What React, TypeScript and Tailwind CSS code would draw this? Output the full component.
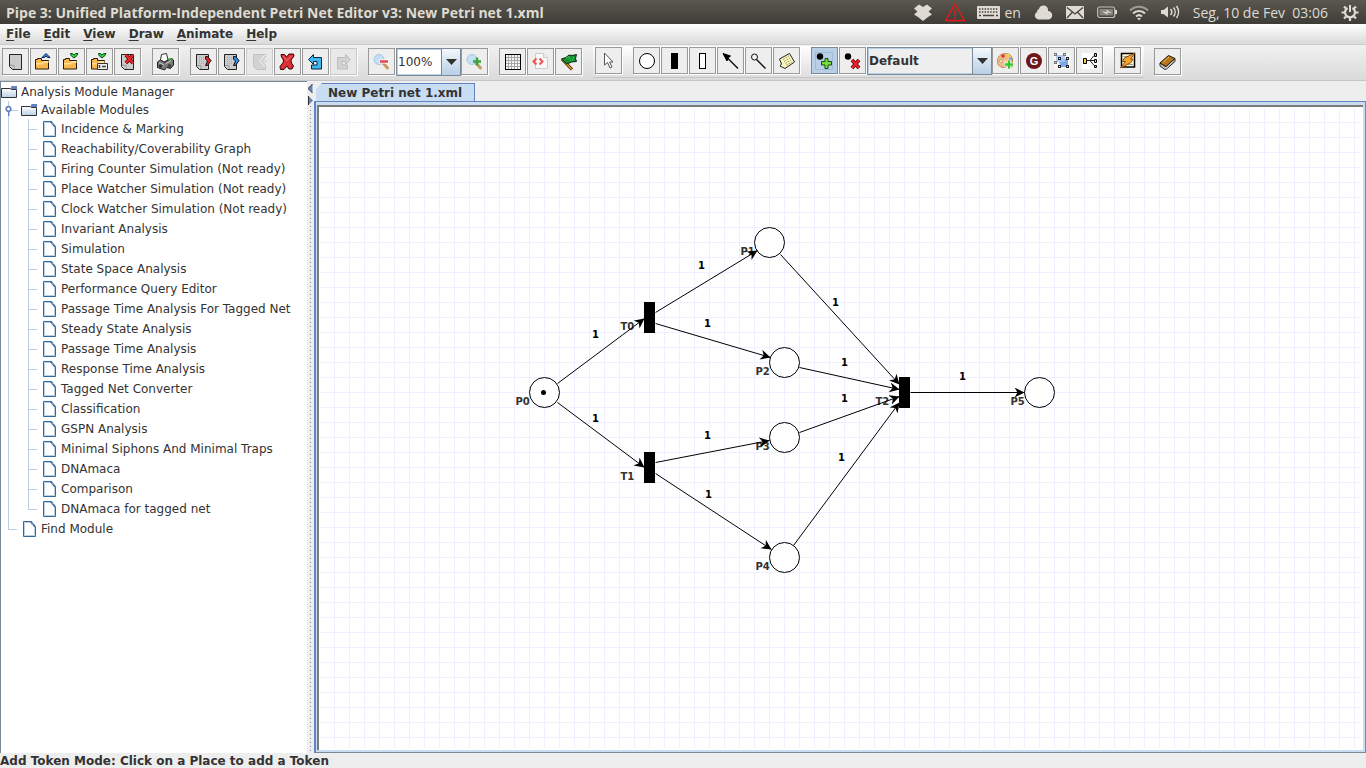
import React from "react";

const UI = "font-['DejaVu_Sans',Verdana,sans-serif]";

/* ---------- toolbar icons ---------- */

function Icon({ children, crisp = true }: { children: React.ReactNode; crisp?: boolean }) {
  return (
    <svg width="19" height="19" viewBox="0 0 19 19" aria-hidden="true" shapeRendering={crisp ? "crispEdges" : "auto"}>
      {children}
    </svg>
  );
}

function Page({ faded = false }: { faded?: boolean }) {
  return (
    <g>
      <path
        d="M3.5 2.5h12v15h-9l-3-3z"
        fill={faded ? "#d3d3d3" : "#cbcbcb"}
        stroke={faded ? "#c2c2c2" : "#222"}
      />
      {!faded && <path d="M4 13l4 .5v3.500" fill="none" stroke="#9a9a9a" />}
    </g>
  );
}

function Folder() {
  return (
    <g>
      <path d="M1.500 7.500h2v-1h4v2h7v8.500h-13z" fill="#f9b84c" stroke="#2a1a05" />
      <path d="M2 11h6l1.500-2h5v2h-5l-1 1.500h-6.500z" fill="#ffdf9a" />
    </g>
  );
}

function Cross({ x = 0, y = 0 }: { x?: number; y?: number }) {
  return (
    <g transform={`translate(${x} ${y})`}>
      <path d="M1 1l7 8M8 1l-7 8" stroke="#5a0000" strokeWidth="3.600" />
      <path d="M1 1l7 8M8 1l-7 8" stroke="#f0242c" strokeWidth="2" />
    </g>
  );
}

function Chevron({ color }: { color: string }) {
  return (
    <g>
      <path d="M11.500 4.500h2l3.500 4-3.500 5h-2l2-4.500-2-2z" fill={color} stroke="#111" />
    </g>
  );
}

function Clipboard({ color }: { color: string }) {
  return (
    <Icon crisp={false}>
      <path d="M2.500 2.500h12v15h-9l-3-3z" fill="#cbcbcb" stroke="#222" />
      <path d="M5 5.500h5M5 7.500h6M5 9.500h5M5 11.500h5" stroke="#aaa" strokeDasharray="1 1" />
      <path d="M3 13.500h4v3.500" fill="none" stroke="#999" />
      <Chevron color={color} />
    </Icon>
  );
}

function SaveMark() {
  return <path d="M8.500 1.500h2l1.500 1.500 1.500-1.500h2.500l-1 2-3 2.500-3-2.500z" fill="#35d04a" stroke="#0b4a12" />;
}

function PlusSign({ x, y }: { x: number; y: number }) {
  return (
    <g transform={`translate(${x} ${y})`}>
      <path d="M3 0h3v3h3v3h-3v3h-3v-3h-3v-3h3z" fill="#39c532" stroke="#fff" strokeWidth=".6" />
    </g>
  );
}

const icons = {
  new: <Icon crisp={false}><Page /></Icon>,
  open: <Icon crisp={false}><Folder /><path d="M8 5.500l4-4 4 4h-2.500l-1.500-1.500-1.500 1.500z" fill="#2a8cf0" stroke="#0b1f45" /></Icon>,
  save: <Icon crisp={false}><Folder /><SaveMark /></Icon>,
  saveAs: (
    <Icon crisp={false}>
      <Folder />
      <SaveMark />
      <path d="M7.500 11.500h10v6h-10z" fill="#eee" stroke="#333" /><path d="M9.500 13v3M12 14.500h4" stroke="#444" strokeWidth="1.500" />
    </Icon>
  ),
  close: <Icon crisp={false}><Page /><Cross x={7} y={2} /></Icon>,
  print: (
    <Icon crisp={false}>
      <path d="M4.500 8l1-5.500 5-1 1.500 6.500-4 2z" fill="#fff" stroke="#333" />
      <path d="M1.500 10l3-2 4 2.500 4-2.500 3-1.500 2 1.500v5l-3 3.500-4-1-2 2.500-7-2.500z" fill="#7c7c7c" stroke="#1d1d1d" />
      <path d="M3 10.500l5 2.500M10 11.500l5-3" stroke="#c8c8c8" fill="none" /><circle cx="4.500" cy="14" r="1.800" fill="#333" /><circle cx="13.500" cy="14" r="2" fill="#444" />
      <path d="M12 7h3" stroke="#35c435" strokeWidth="1.500" />
    </Icon>
  ),
  cut: <Clipboard color="#e8242c" />,
  copy: <Clipboard color="#2d8ff0" />,
  paste: <Icon crisp={false}><Page faded /><path d="M16 4l-4 5 4 5" fill="none" stroke="#efefef" strokeWidth="4" /><path d="M16 4l-4 5 4 5" fill="none" stroke="#cfcfcf" strokeWidth="2" /></Icon>,
  delete: (
    <Icon crisp={false}>
      <path d="M3 2.500h3.500l2 2.500 2.500-3h4.500l.5 2-3 4 .5 3 2 3-1.500 3h-3l-2-3-3 3.500h-3.500l-.5-3 3.500-4.500-.5-3-1.500-2z" fill="#dc2f36" stroke="#3d0508" />
      <path d="M5 4l4 4.500 4.500-4.500" fill="none" stroke="#f0777b" />
    </Icon>
  ),
  undo: <Icon crisp={false}><path d="M2.500 7.500l5-5v3h8v11.500h-10v-4h5.500v-3.500h-3.500v3z" fill="#3fb7ef" stroke="#08263f" /></Icon>,
  redo: <Icon crisp={false}><path d="M16.500 7.500l-5-5v3h-8v11.500h10v-4h-5.500v-3.500h3.500v3z" fill="#d2d2d2" stroke="#bdbdbd" /></Icon>,
  zoomOut: (
    <Icon crisp={false}>
      <path d="M11 11l4.500 5" stroke="#c79a62" strokeWidth="3" strokeLinecap="round" />
      <circle cx="7" cy="7.500" r="5" fill="#c4e0f7" stroke="#a9c3dd" /><path d="M7.500 9.500h9" stroke="#fff" strokeWidth="4" /><path d="M8 9.500h8" stroke="#e4434b" strokeWidth="2.500" />
    </Icon>
  ),
  zoomIn: (
    <Icon crisp={false}>
      <path d="M11 11l4.500 5" stroke="#c79a62" strokeWidth="3" strokeLinecap="round" />
      <circle cx="7" cy="7.500" r="5" fill="#c4e0f7" stroke="#a9c3dd" /><path d="M8 9.500h8M12 5.500v8" stroke="#38a53a" strokeWidth="2.500" />
    </Icon>
  ),
  grid: (
    <Icon>
      <path d="M2.500 2.500h15v15h-15z" fill="#f4f4f4" />
      <path d="M5.500 3v14M8.500 3v14M11.500 3v14M14.500 3v14M3 5.500h14M3 8.500h14M3 11.500h14M3 14.500h14" stroke="#a6a6a6" />
      <path d="M2.500 2.500h15v15h-15z" fill="none" stroke="#000" />
    </Icon>
  ),
  xml: (
    <Icon crisp={false}>
      <path d="M4.500 1.500h8l4 4v11h-12z" fill="#f8f8f8" stroke="#ccc" /><path d="M12.500 1.500v4h4" fill="#eee" stroke="#ccc" />
      <path d="M5.500 6.500L2.500 9.500l3 3M8.500 6.500l3 3-3 3" fill="none" stroke="#ef5350" strokeWidth="2" />
    </Icon>
  ),
  flag: (
    <Icon crisp={false}>
      <path d="M3 7l10 10.500" stroke="#3a2203" strokeWidth="3" /><path d="M3 7l10 10.500" stroke="#e69a24" strokeWidth="1.500" />
      <path d="M2.500 7l4.500-1.500 3-2.500 3 .5 4.500-1-1 4 1 3-5 .5-4.500 2z" fill="#148f32" stroke="#062c10" /><path d="M7 6.500l3-2 1.500 4M14.500 4.500l-1 4" fill="none" stroke="#3fc457" />
    </Icon>
  ),
  select: <Icon crisp={false}><path d="M5.500 2v12l3-2.500 2.500 5.500 2-1-2.500-5h3.500z" fill="#fff" stroke="#555" /></Icon>,
  place: <Icon crisp={false}><circle cx="10" cy="10" r="7.500" fill="#fff" stroke="#000" /></Icon>,
  immediate: <Icon><path d="M6 2h7v16h-7z" /></Icon>,
  timed: <Icon><path d="M6.500 2.500h6v15h-6z" fill="#fff" stroke="#000" /></Icon>,
  arc: <Icon crisp={false}><path d="M5 5.500l12 12" stroke="#000" strokeWidth="1.300" /><path d="M2 2.500l7.500 2.500-2.500 2-1 3z" stroke="#000" /></Icon>,
  inhibitor: <Icon crisp={false}><circle cx="5.500" cy="6" r="3" fill="#f2f2f2" stroke="#111" /><path d="M7.500 8.500l9 9" stroke="#111" strokeWidth="1.400" /></Icon>,
  note: (
    <Icon crisp={false}>
      <path d="M2.500 8l10-5.500 5 8.500-9.500 6.500-5-2.500 1.500-2z" fill="#faf6c0" stroke="#222" /><path d="M6 8.500l6-3.500M7 10.500l6-3.500M8 12.500l6-3.500M9 14.500l6-3.500" stroke="#a8a36c" strokeDasharray="2 1" />
    </Icon>
  ),
  addToken: (
    <Icon crisp={false}>
      <path d="M.5 1.500h17v17h-17z" fill="none" stroke="#a3bbd8" />
      <circle cx="5" cy="5.500" r="3.200" /><path d="M10 7.500h3v3h3.500v3.500h-3.500v3.500h-3v-3.500h-3.500v-3.500h3.500z" fill="#7bdc3e" stroke="#174d09" />
    </Icon>
  ),
  removeToken: <Icon crisp={false}><circle cx="5" cy="5.500" r="3.200" /><Cross x={8} y={8} /></Icon>,
  palette: (
    <Icon crisp={false}>
      <path d="M1.500 10c0-4 3-7.500 8-7.500 4.500 0 7 3 7 6.500v7c-2 0-3-2-5-1.500-1 1-2.500 2-4.500 2-2 0-2.500-1.500-4-2s-1.500-2.500-1.500-4.500z" fill="#edbd88" stroke="#c08b58" />
      <circle cx="7" cy="5" r="1.800" fill="#d93431" /><circle cx="12" cy="4.500" r="1.600" fill="#f3d846" /><circle cx="14.500" cy="8" r="1.600" fill="#5d9fe3" />
      <circle cx="5" cy="10" r="1.500" fill="#fff2df" stroke="#b57b46" strokeWidth=".6" /><circle cx="9" cy="10.500" r="1" fill="#fff2df" /><PlusSign x={8.5} y={9} />
    </Icon>
  ),
  group: (
    <Icon crisp={false}>
      <rect x="2" y="2" width="16" height="16" fill="#f5eeee" /><circle cx="10" cy="10" r="8" fill="#6d1719" />
      <text x="10" y="14" textAnchor="middle" fontSize="11" fontWeight="bold" fill="#fff" fontFamily="Liberation Sans, sans-serif">G</text>
    </Icon>
  ),
  unfold: (
    <Icon crisp={false}>
      <rect x="2" y="2" width="16" height="16" fill="#f8f8f8" /><path d="M7 8h9v8h-8z" fill="#7ea6e4" /><path d="M4 4h9v7h-9z" fill="#a5c3f0" opacity=".85" />
      {[[3, 3], [12, 3], [3, 11], [7, 7], [15, 7], [7, 15], [15, 15]].map(([x, y]) => (
        <rect key={`${x}-${y}`} x={x - 0.5} y={y - 0.5} width="2" height="2" fill="#ddd" stroke={x > 6 && y > 6 ? "#222" : "#777"} />
      ))}
    </Icon>
  ),
  tree: (
    <Icon crisp={false}>
      <rect x="2" y="2" width="16" height="16" fill="#fff" />
      <path d="M6 9.500h8M10 9.500l4-5M10 9.500l4 5" fill="none" stroke="#222" />
      <path d="M3.500 7.500h3v5h-3z" fill="#f5c93f" stroke="#000" />
      <path d="M14.500 2.500h2v3h-2zM14.500 8.500h2v3h-2zM14.500 14.500h2v2h-2z" fill="#f5c93f" stroke="#000" />
    </Icon>
  ),
  animate: (
    <Icon crisp={false}>
      <path d="M3.500 2.500h13v13.500h-13z" fill="#fffbd0" stroke="#000" strokeWidth="1.500" /><path d="M5.500 5.500h6M5.500 8h3M10 13.500h5" stroke="#999" />
      <path d="M17 2l-10.500 5-2 3.500h3l-5 6.500 10.500-5.500 2-3.500h-2.500z" fill="#f6a531" stroke="#8a4b07" />
    </Icon>
  ),
  help: (
    <Icon crisp={false}>
      <path d="M2 11v3l5 3.500 1.500-.5 8.500-7.500v-3l-9.500 8z" fill="#e4e4e4" stroke="#222" />
      <path d="M2 11l8.500-7.500 6.500 3-9 8z" fill="#b5771c" stroke="#221402" /><path d="M4.500 11l6.500-6" stroke="#e5b15b" /><path d="M3 13l5 3.500 8-7.500" fill="none" stroke="#aaa" />
    </Icon>
  ),
};

type IconName = keyof typeof icons;

function ToolButton({ icon, label, disabled, active }: { icon: IconName; label: string; disabled?: boolean; active?: boolean }) {
  return (
    <button
      type="button"
      aria-label={label}
      title={label}
      disabled={disabled}
      className={`flex size-[27px] shrink-0 items-center justify-center border shadow-[1px_1px_0_#fff] ${
        active ? "border-[#7a8a99] bg-[#b8cfe5]" : disabled ? "border-[#c8c8c8] bg-[#e8e8e8]" : "border-[#999] bg-[#eee]"
      }`}
    >
      {icons[icon]}
    </button>
  );
}

function Group({ items }: { items: [IconName, string, ("disabled" | "active")?][] }) {
  return (
    <div className="flex gap-px">
      {items.map(([icon, label, state]) => (
        <ToolButton key={icon} icon={icon} label={label} disabled={state === "disabled"} active={state === "active"} />
      ))}
    </div>
  );
}

function Combo({ label, value, className, tone }: { label: string; value: string; className: string; tone: string }) {
  return (
    <div className={`relative h-7 shrink-0 border border-[#7a8a99] ${className}`}>
      <select
        aria-label={label}
        defaultValue={value}
        className={`h-full w-full appearance-none rounded-none border border-[#b8cfe5] text-[12px] text-[#333] outline-none ${tone}`}
      >
        <option>{value}</option>
      </select>
      <span className="pointer-events-none absolute inset-y-0 right-0 flex w-[19px] items-center justify-center border-l border-[#7a8a99] bg-linear-to-b from-[#f4f8fc] to-[#b8cfe5]">
        <svg width="11" height="6" viewBox="0 0 11 6"><path d="M0 0h11L5.500 6z" fill="#333" /></svg>
      </span>
    </div>
  );
}

function ToolBar() {
  return (
    <div className="flex h-9 items-start gap-[11px] border-b border-[#c6c6c6] bg-linear-to-b from-[#f1f1f1] to-[#dadada] pt-[3px] pl-0.5">
      <Group items={[["new", "New"], ["open", "Open"], ["save", "Save"], ["saveAs", "Save as"], ["close", "Close"]]} />
      <Group items={[["print", "Print"]]} />
      <Group items={[["cut", "Cut"], ["copy", "Copy"], ["paste", "Paste", "disabled"], ["delete", "Delete"], ["undo", "Undo"], ["redo", "Redo", "disabled"]]} />
      <div className="flex">
        <ToolButton icon="zoomOut" label="Zoom out" />
        <Combo label="Zoom" value="100%" className="ml-px w-[65px]" tone="bg-white font-normal" />
        <ToolButton icon="zoomIn" label="Zoom in" />
      </div>
      <Group items={[["grid", "Cycle grid"], ["xml", "XML"], ["flag", "Animation mode"]]} />
      <div className="-mt-px flex items-start gap-[10px]">
        <div className="-mt-px flex gap-[11px] border-b border-[#c6c6c6] bg-linear-to-b from-[#fff] to-[#dedede] pt-px pr-[3px] pb-0.5 pl-0.5">
          <Group items={[["select", "Select"]]} />
          <Group items={[["place", "Place"], ["immediate", "Immediate transition"], ["timed", "Timed transition"], ["arc", "Arc"], ["inhibitor", "Inhibitor arc"], ["note", "Annotation"]]} />
          <div className="flex">
            <Group items={[["addToken", "Add token", "active"], ["removeToken", "Remove token"]]} />
            <Combo label="Token class" value="Default" className="ml-px w-[125px]" tone="bg-[#eee] font-bold" />
            <Group items={[["palette", "Specify token classes"], ["group", "Group"], ["unfold", "Unfold"], ["tree", "Hierarchy"]]} />
          </div>
          <Group items={[["animate", "Toggle drag mode"]]} />
        </div>
        <div className="pt-px">
          <ToolButton icon="help" label="Help" />
        </div>
      </div>
    </div>
  );
}

/* ---------- desktop panel ---------- */

function TrayIcon({ children, w = 20 }: { children: React.ReactNode; w?: number }) {
  return (
    <svg width={w} height="20" viewBox={`0 0 ${w} 20`} fill="#dfdbd2" aria-hidden="true">
      {children}
    </svg>
  );
}

function TopPanel() {
  return (
    <header className="flex h-6 items-center bg-linear-to-b from-[#5b584f] to-[#3d3c37] px-1.5 font-['Open_Sans','Noto_Sans',sans-serif] text-[14px] whitespace-nowrap text-[#dfdbd2]">
      <h1 className="flex-1 font-bold">Pipe 3: Unified Platform-Independent Petri Net Editor v3: New Petri net 1.xml</h1>
      <div className="flex items-center gap-3">
        <div className="flex items-center gap-2">
          <TrayIcon><path d="M6 2.500l4 2.500 4-2.500 5 4-3.500 3 3.500 3-4 2.500-5 4-5-4-4-2.500 3.500-3-3.500-3z" /></TrayIcon>
          <div className="pl-1">
            <TrayIcon><path d="M10 2l9.500 16.500h-19zM10 7.500v6M10 15v2" fill="none" stroke="#f01616" strokeWidth="1.300" /></TrayIcon>
          </div>
        </div>
        <div className="flex items-center gap-1">
          <TrayIcon w={23}>
            <rect x="0" y="4" width="23" height="13" rx="1" />
            <path d="M2 7h19M2 10h19" stroke="#47453e" strokeWidth="1.500" strokeDasharray="1.500 1.300" /><path d="M2 13.500h2M6 13.500h11M19 13.500h2" stroke="#47453e" strokeWidth="1.500" />
          </TrayIcon>
          <span>en</span>
        </div>
        <TrayIcon><path d="M5 17.500a4 4 0 0 1-1-7.500 3 3 0 0 1 2-3 4.500 4.500 0 0 1 9 2 4 4 0 0 1 0 8.500z" /></TrayIcon>
        <TrayIcon>
          <rect x="1" y="4" width="18" height="13" rx="1" /><path d="M2 5.500l8 6.500 8-6.500M2 16l5.500-6M18 16l-5.500-6" fill="none" stroke="#47453e" strokeWidth="1.300" />
        </TrayIcon>
        <TrayIcon>
          <rect x=".7" y="5" width="17" height="10.500" rx="2" fill="none" stroke="#c4c0b6" strokeWidth="1.200" /><rect x="2.500" y="7" width="13.500" height="6.500" fill="#87847b" />
          <path d="M18 8h2v4h-2z" /><path d="M5 9.500l5 .5-1-2.500 6 3.500-5-.5 1 2.500z" />
        </TrayIcon>
        <TrayIcon>
          <g fill="none" stroke="#dfdbd2" strokeWidth="2"><path d="M1 8.500a12.500 12.500 0 0 1 18 0" opacity=".55" /><path d="M4 11.500a8.500 8.500 0 0 1 12 0" /><path d="M7 14.500a4.500 4.500 0 0 1 6 0" /></g><path d="M8 16h4l-2 2.500z" />
        </TrayIcon>
        <TrayIcon>
          <path d="M0 8h2.500L7 4.500v11L2.500 12H0z" /><g fill="none" stroke="#dfdbd2" strokeWidth="1.500"><path d="M9.500 7a4.500 4.500 0 0 1 0 6M12.500 5.500a7 7 0 0 1 0 9M15.500 4a10 10 0 0 1 0 12" /></g>
        </TrayIcon>
        <time className="whitespace-pre">Seg, 10 de Fev  03:06</time>
        <TrayIcon>
          <g fill="none" stroke="#dfdbd2"><path d="M7.500 6a5 5 0 1 0 5 0" strokeWidth="2.200" /><path d="M10 3v7" strokeWidth="2" /><path d="M1.500 10.500h3M15.500 10.500h3M4 4.500l2 2M16 4.500l-2 2M4 16.500l2-2M16 16.500l-2-2M10 16v3" strokeWidth="2.200" /></g>
        </TrayIcon>
      </div>
    </header>
  );
}

/* ---------- menu ---------- */

function MenuBar() {
  return (
    <nav className="flex h-[21px] items-center gap-[13px] border-b border-[#ccc] bg-linear-to-b from-white to-[#dadada] pb-px pl-1.5 text-[12px] font-bold">
      {["File", "Edit", "View", "Draw", "Animate", "Help"].map((m) => (
        <button key={m} type="button"><u className="underline-offset-2">{m[0]}</u>{m.slice(1)}</button>
      ))}
    </nav>
  );
}

/* ---------- module tree ---------- */

const modules = [
  "Incidence & Marking", "Reachability/Coverability Graph", "Firing Counter Simulation (Not ready)",
  "Place Watcher Simulation (Not ready)", "Clock Watcher Simulation (Not ready)", "Invariant Analysis", "Simulation",
  "State Space Analysis", "Performance Query Editor", "Passage Time Analysis For Tagged Net", "Steady State Analysis",
  "Passage Time Analysis", "Response Time Analysis", "Tagged Net Converter", "Classification", "GSPN Analysis",
  "Minimal Siphons And Minimal Traps", "DNAmaca", "Comparison", "DNAmaca for tagged net",
];

function FolderIcon() {
  return (
    <svg width="16" height="14" viewBox="0 0 16 14" className="shrink-0" aria-hidden="true">
      <defs><linearGradient id="folder" x2="0" y2="1"><stop stopColor="#fff" /><stop offset="1" stopColor="#b8cfe5" /></linearGradient></defs>
      <path d="M.5 3.500h8.500l1.500 1h5v8h-15z" fill="url(#folder)" stroke="#333" />
      <path d="M10.500 1h5.500v3h-6.500z" fill="#6382bf" />
    </svg>
  );
}

function FileIcon() {
  return (
    <svg width="13" height="16" viewBox="0 0 13 16" className="shrink-0" aria-hidden="true">
      <path d="M.5.5h8l4 5v10h-12z" fill="#fff" stroke="#35679d" />
      <path d="M1.500 14.500v-13h6M11.500 7v7.500h-10" fill="none" stroke="#b8cfe5" />
      <path d="M7 1l5 6v-2l-3.500-4.500z" fill="#35679d" /><path d="M8 3.500l2.500-1" stroke="#b8cfe5" />
    </svg>
  );
}

const branch = "before:w-[9px] before:shrink-0 before:border-t before:border-[#b8cfe5] before:content-['']";

function ModuleTree() {
  return (
    <aside className="w-[307px] shrink-0 overflow-hidden border-t border-l border-[#7a8a99] bg-white text-[12px] whitespace-nowrap">
      <div className="flex h-[19px] items-center gap-1"><FolderIcon />Analysis Module Manager</div>
      <ul className="pl-[7px]">
        <li className="relative border-l border-[#b8cfe5]">
          <div className={`flex h-[18px] items-center ${branch}`}>
            <svg width="7" height="11" viewBox="0 0 7 11" className="absolute top-1 -left-1" aria-hidden="true">
              <circle cx="3.500" cy="4" r="2.300" fill="#fff" stroke="#6382bf" strokeWidth="1.700" /><path d="M3 6h1.500v5h-1.500z" fill="#6382bf" />
            </svg>
            <span className="flex items-center gap-1 pl-[3px]"><FolderIcon />Available Modules</span>
          </div>
          <ul className="pl-[19px]">
            {modules.map((name, i) => (
              <li key={name} className="relative flex h-5 items-center">
                <span className={`absolute top-0 left-0 w-px bg-[#b8cfe5] ${i === modules.length - 1 ? "h-2.5" : "h-5"}`} />
                <div className={`flex items-center ${branch}`}>
                  <span className="flex items-center gap-[5px] pl-[6px]"><FileIcon />{name}</span>
                </div>
              </li>
            ))}
          </ul>
        </li>
        <li className="relative flex h-5 items-center">
          <span className="absolute top-0 left-0 h-2.5 w-px bg-[#b8cfe5]" />
          <div className={`flex items-center ${branch}`}>
            <span className="flex items-center gap-[5px] pl-[6px]"><FileIcon />Find Module</span>
          </div>
        </li>
      </ul>
    </aside>
  );
}

function Divider() {
  return (
    <div className="flex w-[7px] shrink-0 flex-col items-center bg-[#eee] pt-[3px]">
      <svg width="5" height="22" viewBox="0 0 5 22" aria-hidden="true">
        <path d="M4.500 0v9l-4.500-4.500z" fill="#6382bf" /><path d="M4.500 0l-4.500 4.500 4.500 4.500" fill="none" stroke="#333" />
        <path d="M.5 12v9l4.500-4.500z" fill="#6382bf" /><path d="M.5 12v9" stroke="#333" />
      </svg>
      <div className="w-px flex-1 bg-[repeating-linear-gradient(#7a8a99_0_1px,#eee_1px_4px)]" />
    </div>
  );
}

/* ---------- Petri net canvas ---------- */

const places = [
  { id: "P0", x: 225, y: 285 }, { id: "P1", x: 450, y: 135 }, { id: "P2", x: 465, y: 255 },
  { id: "P3", x: 465, y: 330 }, { id: "P4", x: 465, y: 450 }, { id: "P5", x: 720, y: 285 },
];
const transitions = [{ id: "T0", x: 330, y: 210 }, { id: "T1", x: 330, y: 360 }, { id: "T2", x: 585, y: 285 }];
const arcs = [
  [238, 276, 325, 211], [238, 295, 325, 360], [336, 205, 438, 143], [336, 216, 451, 250], [336, 355, 450, 333],
  [336, 366, 452, 442], [461, 147, 580, 277], [480, 260, 580, 282], [480, 325, 580, 289], [474, 438, 580, 295], [591, 285, 705, 285],
];
const weights = [
  [276, 231], [382, 162], [388, 220], [516, 199], [525, 259], [525, 295], [522, 354], [643, 273], [276, 315], [388, 332], [389, 391],
];

function Canvas() {
  return (
    <svg className="min-h-0 w-full flex-1 bg-white" role="img" aria-label="Petri net">
      <defs>
        <pattern id="grid" width="15" height="15" patternUnits="userSpaceOnUse">
          <path d="M0 .5h15M.5 0v15" stroke="#efefff" />
        </pattern>
        <marker id="head" markerUnits="userSpaceOnUse" markerWidth="12" markerHeight="12" refX="10" refY="5" orient="auto">
          <path d="M0 0L10 5 0 10 3 5z" />
        </marker>
      </defs>
      <rect width="100%" height="100%" fill="url(#grid)" />
      <rect width="100%" height="100%" fill="none" stroke="#fff" strokeWidth="4" />
      <g transform="translate(.5 .5)" fontFamily="DejaVu Sans, Verdana, sans-serif" fontSize="10" fontWeight="bold">
        {[...places, ...transitions].map((n) => (
          <text key={n.id} x={n.x - 29} y={n.y + 12.5} fill="#333">{n.id}</text>
        ))}
        {weights.map(([x, y]) => (
          <text key={`${x}-${y}`} x={x} y={y - 0.5} textAnchor="middle" fill="#000">1</text>
        ))}
        {places.map((p) => (
          <circle key={p.id} cx={p.x} cy={p.y} r="15" fill="#fff" stroke="#000" />
        ))}
        <circle cx="224" cy="285" r="2.500" />
        {arcs.map(([x1, y1, x2, y2]) => (
          <line key={`${x1}-${y1}-${x2}-${y2}`} x1={x1} y1={y1} x2={x2} y2={y2} stroke="#000" markerEnd="url(#head)" />
        ))}
        {transitions.map((t) => (
          <rect key={t.id} x={t.x - 5.5} y={t.y - 15.5} width="11" height="31" />
        ))}
      </g>
    </svg>
  );
}

function Editor() {
  return (
    <main className="flex min-w-0 flex-1 flex-col bg-[#eee] pt-0.5">
      <div role="tablist" className="flex h-[18px] pl-0.5">
        <button
          type="button"
          role="tab"
          aria-selected="true"
          className="border-t border-r border-[#6382bf] bg-[#c8ddf2] px-3 text-[12px] leading-[18px] font-bold [clip-path:polygon(0_6px,6px_0,100%_0,100%_100%,0_100%)]"
        >
          New Petri net 1.xml
        </button>
      </div>
      <div className="flex min-h-0 flex-1 flex-col border-t border-r border-b border-l-2 border-[#6382bf] border-r-[#7a8a99] border-b-[#7a8a99] bg-[#c8ddf2] pt-[3px] pr-0.5 pb-0.5 pl-px">
        <div className="flex min-h-0 flex-1 flex-col border-t-2 border-l-2 border-[#7a7a7a]">
          <Canvas />
        </div>
      </div>
    </main>
  );
}

export default function App() {
  return (
    <div className={`flex h-screen flex-col overflow-hidden bg-[#eee] text-[#333] ${UI}`}>
      <TopPanel />
      <MenuBar />
      <ToolBar />
      <div className="flex min-h-0 flex-1">
        <ModuleTree />
        <Divider />
        <Editor />
      </div>
      <footer className="h-[15px] text-[12px] leading-4 font-bold">Add Token Mode: Click on a Place to add a Token</footer>
    </div>
  );
}
